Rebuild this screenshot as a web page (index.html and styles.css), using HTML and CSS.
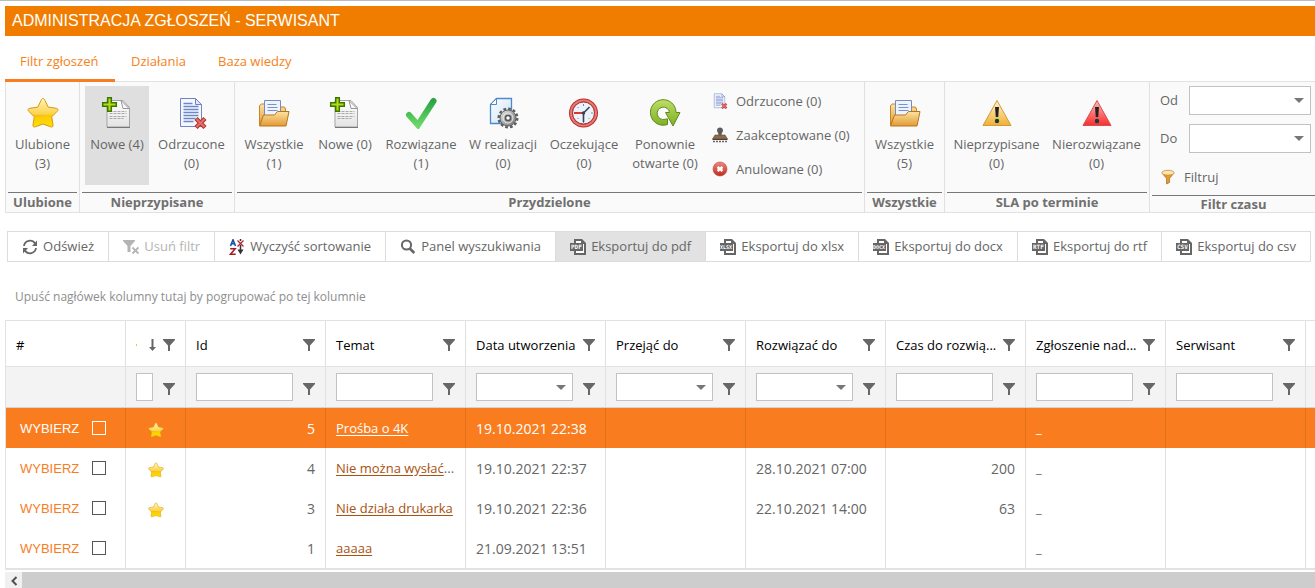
FILE: index.html
```html
<!DOCTYPE html>
<html lang="pl">
<head>
<meta charset="utf-8">
<title>Administracja zgłoszeń - Serwisant</title>
<link rel="stylesheet" href="styles.css">
</head>
<body>
<svg class="sprite" aria-hidden="true">
  <defs>
    <linearGradient id="gold" x1="0" y1="0" x2="0" y2="1"><stop offset="0" stop-color="#fff6b8"/><stop offset=".55" stop-color="#fbd34e"/><stop offset=".6" stop-color="#f6bd12"/><stop offset="1" stop-color="#ffe600"/></linearGradient>
    <linearGradient id="paper" x1="0" y1="0" x2="0" y2="1"><stop offset="0" stop-color="#ffffff"/><stop offset="1" stop-color="#e4e2e2"/></linearGradient>
    <linearGradient id="bluepaper" x1="0" y1="0" x2="1" y2="1"><stop offset="0" stop-color="#ffffff"/><stop offset="1" stop-color="#c8e0f5"/></linearGradient>
    <linearGradient id="folder" x1="0" y1="0" x2="0" y2="1"><stop offset="0" stop-color="#fde3a2"/><stop offset="1" stop-color="#e29a34"/></linearGradient>
    <linearGradient id="tick" x1="0" y1="0" x2="0" y2="1"><stop offset="0" stop-color="#2ba444"/><stop offset="1" stop-color="#6ad866"/></linearGradient>
    <linearGradient id="steel" x1="0" y1="0" x2="1" y2="1"><stop offset="0" stop-color="#e6e6e6"/><stop offset="1" stop-color="#707070"/></linearGradient>
    <linearGradient id="lime" x1="0" y1="0" x2="0" y2="1"><stop offset="0" stop-color="#c0dd66"/><stop offset="1" stop-color="#7bb024"/></linearGradient>
    <linearGradient id="amber" x1="0" y1="0" x2="0" y2="1"><stop offset="0" stop-color="#fff6cf"/><stop offset="1" stop-color="#efb032"/></linearGradient>
    <linearGradient id="alarm" x1="0" y1="0" x2="0" y2="1"><stop offset="0" stop-color="#ffb8b8"/><stop offset="1" stop-color="#f92d2d"/></linearGradient>
    <linearGradient id="red" x1="0" y1="0" x2="0" y2="1"><stop offset="0" stop-color="#ec8a80"/><stop offset="1" stop-color="#c02a1c"/></linearGradient>
  </defs>
  <symbol id="star" viewBox="0 0 32 32"><path d="M16 1.500c1 0 1.500.8 2 2l3.200 6.600 8 1.200c2 .4 2.300 1.600 1 3l-5.500 5.500 1.300 8c.2 2-.9 2.700-2.600 1.900L16 27l-7.400 2.700c-1.700.8-2.800.1-2.600-1.900l1.300-8L1.800 14.300c-1.300-1.400-1-2.600 1-3l8-1.200L14 3.500c.5-1.200 1-2 2-2z" fill="url(#gold)" stroke="#d9960c" stroke-width="1"/><path d="M7 20c7 0 13-2 19-6l-2 7 1 7-9-3-8 3z" fill="#ffd900" opacity=".4"/></symbol>
  <symbol id="doc-plus" viewBox="0 0 32 32"><path d="M6 3.500h16l6.500 7V30H6z" fill="url(#paper)" stroke="#a3a3a3"/><path d="M6 30.500h23" stroke="#777"/><path d="M20 3.500l8 8h-6z" fill="#f8f8f8" stroke="#999"/><path d="M8.500 14.500h17M8.500 16.500h17M8.500 19.500h17M8.500 21.500h14" stroke="#aaa" stroke-dasharray="3 1"/><path d="M6.700.7h3.600v5h5v3.600h-5v5H6.700v-5h-5V5.700h5z" fill="#b6da19" stroke="#397700" stroke-width="1.500"/></symbol>
  <symbol id="doc-x" viewBox="0 0 32 32"><path d="M4.500 1.500h15l6 6v22h-21z" fill="#f4f7fe" stroke="#6f86c0"/><path d="M19.500 1.500v6h6z" fill="#dfe7fb" stroke="#6f86c0"/><path d="M7.500 6.500h9M7.500 9.500h15M7.500 12.500h15M7.500 15.500h15M7.500 18.500h15M7.500 21.500h12M7.500 24.500h10" stroke="#6c86c6" stroke-width="1.300"/><path d="M20 21.500l9 9M29 21.500l-9 9" stroke="#b4302d" stroke-width="4.400"/><path d="M20.500 22l8 8M28.500 22l-8 8" stroke="#e27167" stroke-width="2.200"/></symbol>
  <symbol id="folder-open" viewBox="0 0 32 32"><path d="M1.500 28V8.500l2-1.500h4l1 3h18l1 2v6" fill="url(#folder)" stroke="#c48627"/><path d="M6.500 3.500h16v19h-16z" fill="#eef4ff" stroke="#748bc3"/><path d="M9.500 7.500h9M9.500 10.500h10M9.500 13.500h10" stroke="#7890cc"/><path d="M1.500 29l4-11h11l3-3.500h11.500L28 29z" fill="url(#folder)" stroke="#b8741c"/></symbol>
  <symbol id="check" viewBox="0 0 32 32"><path d="M4 18l9 10L28.500 4" fill="none" stroke="url(#tick)" stroke-width="6" stroke-linecap="round"/></symbol>
  <symbol id="doc-gear" viewBox="0 0 32 32"><path d="M9.500 1.500h15v25h-21v-19z" fill="url(#bluepaper)" stroke="#4f89c6" stroke-width="1.300"/><path d="M9.500 1.500v6h-6z" fill="#fff" stroke="#4f89c6"/><circle cx="21" cy="21" r="9" fill="none" stroke="#5e5e5e" stroke-width="3" stroke-dasharray="2.700 2"/><circle cx="21" cy="21" r="8" fill="url(#steel)" stroke="#666"/><circle cx="21" cy="21" r="5" fill="none" stroke="#eee" stroke-width="1"/><circle cx="21" cy="21" r="2.500" fill="#fff" stroke="#555" stroke-width="1.500"/></symbol>
  <symbol id="clock" viewBox="0 0 32 32"><circle cx="15.500" cy="16" r="14.500" fill="#bd2b2d"/><circle cx="15.500" cy="16" r="12.500" fill="none" stroke="#e67b76" stroke-width="2"/><circle cx="15.500" cy="16" r="11" fill="#edf3fa" stroke="#a33"/><path d="M15.500 7v2M15.500 23v3M7 16h2M23 16h2M9.500 10l1 1M9.500 22l1-1M21.500 22l-1-1" stroke="#7a869a"/><path d="M15.500 16H6" stroke="#d22" stroke-width="1.800"/><path d="M15.500 25v-9l6-6" fill="none" stroke="#354358" stroke-width="1.600"/><circle cx="15.500" cy="16" r="1.700" fill="#354358"/></symbol>
  <symbol id="reopen" viewBox="0 0 32 32"><path d="M18.500 27.500A12.800 12.800 0 1 1 27 15.500h4L24 29l-7.500-13.500h4a6.200 6.200 0 1 0-4.500 6.800l2.500-.5z" fill="url(#lime)" stroke="#5f8b1c"/></symbol>
  <symbol id="warn" viewBox="0 0 32 32"><path d="M16 3.500l14 25H2z" fill="url(#amber)" stroke="#d29a38" stroke-linejoin="round"/><path d="M14 10h4l-.8 10h-2.400z" fill="#222"/><circle cx="16" cy="24" r="2.200" fill="#123b44"/></symbol>
  <symbol id="alert" viewBox="0 0 32 32"><path d="M16 3.500l14 25H2z" fill="url(#alarm)" stroke="#d65050" stroke-linejoin="round"/><path d="M14 10h4l-.8 10h-2.400z" fill="#222"/><circle cx="16" cy="24" r="2.200" fill="#123b44"/></symbol>
  <symbol id="stamp" viewBox="0 0 16 16"><path d="M5 3.500C5 1.500 6.300.5 8 .5s3 1 3 3c0 1.500-1.500 2-1.500 4.500h-3C6.500 5.500 5 5 5 3.500z" fill="#5c5c5c"/><path d="M3 8h10l2.500 4H.5z" fill="#8e6a46" stroke="#5f4a38" stroke-width=".6"/><path d="M.5 12.500h15" stroke="#444"/><path d="M1 14.500h14" stroke="#666" stroke-width="1.600" stroke-dasharray="2 1"/></symbol>
  <symbol id="cancel" viewBox="0 0 16 16"><circle cx="8" cy="8" r="7" fill="url(#red)" stroke="#b4473c" stroke-width=".6"/><path d="M5.500 6l5 4M10.500 6l-5 4" stroke="#fff" stroke-width="2.400"/></symbol>
  <symbol id="funnel-gold" viewBox="0 0 16 16"><path d="M2 4l4.500 5.500V15l3-1.500v-4L14 4z" fill="#e49b2d" stroke="#a86a1f" stroke-width=".7"/><ellipse cx="8" cy="3.700" rx="6.200" ry="2.400" fill="#fde6b1" stroke="#c68a35" stroke-width=".8"/></symbol>
  <symbol id="filter" viewBox="0 0 12 12"><path d="M0 0h12v1L7 6.500V12H5V6.500L0 1z" fill="currentColor"/></symbol>
  <symbol id="filter-off" viewBox="0 0 16 16"><path d="M0 1h12v1L7.500 7v6h-3V7L0 2z" fill="currentColor"/><path d="M9.500 8.500l6 6M15.500 8.500l-6 6" stroke="currentColor" stroke-width="1.800"/></symbol>
  <symbol id="refresh" viewBox="0 0 16 16"><path d="M2 7a6 6 0 0 1 11-2.500M14 9a6 6 0 0 1-11 2.500" fill="none" stroke="currentColor" stroke-width="1.800"/><path d="M15 1.500V7h-5zM1 14.500V9h5z" fill="currentColor"/></symbol>
  <symbol id="sort-clear" viewBox="0 0 16 16"><path d="M1.500 7L4 .8 6.500 7M2.300 4.800h3.400" fill="none" stroke="#164f9c" stroke-width="1.600"/><path d="M1.200 9.700h5L1.500 15.200h5.200" fill="none" stroke="#a51c24" stroke-width="1.500"/><path d="M11.500 0v2M11.500 6v5" stroke="#333" stroke-width="1.500"/><path d="M8.500 10.500h6l-3 5z" fill="#333"/><path d="M8.500 1.500l6 6M14.500 1.500l-6 6" stroke="#b3262d" stroke-width="1.300"/></symbol>
  <symbol id="search" viewBox="0 0 16 16"><circle cx="6.500" cy="6" r="4.600" fill="none" stroke="currentColor" stroke-width="2"/><path d="M9.800 9.500l4.500 4.500" stroke="currentColor" stroke-width="2.600"/></symbol>
  <symbol id="file" viewBox="0 0 16 16"><path d="M4 0h8l4 4v12H4z" fill="currentColor"/><path d="M6 2h5v3h3v9H6z" fill="#fff"/><path d="M0 4h13v8H0z" fill="currentColor"/></symbol>
  <symbol id="arrow-down" viewBox="0 0 7 12"><path d="M2.500 0h2v8H7l-3.500 4L0 8h2.500z" fill="currentColor"/></symbol>
  <symbol id="caret" viewBox="0 0 10 5"><path d="M0 0h10L5 5z" fill="currentColor"/></symbol>
</svg>

<div class="page">
  <h1 class="title">ADMINISTRACJA ZGŁOSZEŃ - SERWISANT</h1>

  <nav class="tabs">
    <a class="tab tab-active" href="#filtr">Filtr zgłoszeń</a>
    <a class="tab" href="#dzialania">Działania</a>
    <a class="tab" href="#baza">Baza wiedzy</a>
  </nav>

  <div class="ribbon">
    <section class="group">
      <div class="items items-single">
        <button class="item"><svg class="big"><use href="#star"/></svg><span>Ulubione<br>(3)</span></button>
      </div>
      <h2 class="caption">Ulubione</h2>
    </section>
    <section class="group">
      <div class="items items-unassigned">
        <button class="item item-on"><svg class="big"><use href="#doc-plus"/></svg><span>Nowe (4)</span></button>
        <button class="item"><svg class="big"><use href="#doc-x"/></svg><span>Odrzucone<br>(0)</span></button>
      </div>
      <h2 class="caption">Nieprzypisane</h2>
    </section>
    <section class="group">
      <div class="items items-assigned">
        <button class="item"><svg class="big"><use href="#folder-open"/></svg><span>Wszystkie<br>(1)</span></button>
        <button class="item"><svg class="big"><use href="#doc-plus"/></svg><span>Nowe (0)</span></button>
        <button class="item"><svg class="big"><use href="#check"/></svg><span>Rozwiązane<br>(1)</span></button>
        <button class="item"><svg class="big"><use href="#doc-gear"/></svg><span>W realizacji<br>(0)</span></button>
        <button class="item"><svg class="big"><use href="#clock"/></svg><span>Oczekujące<br>(0)</span></button>
        <button class="item"><svg class="big"><use href="#reopen"/></svg><span>Ponownie<br>otwarte (0)</span></button>
        <div class="stack">
          <button class="line"><svg class="small"><use href="#doc-x"/></svg>Odrzucone (0)</button>
          <button class="line"><svg class="small"><use href="#stamp"/></svg>Zaakceptowane (0)</button>
          <button class="line"><svg class="small"><use href="#cancel"/></svg>Anulowane (0)</button>
        </div>
      </div>
      <h2 class="caption">Przydzielone</h2>
    </section>
    <section class="group">
      <div class="items items-single">
        <button class="item"><svg class="big"><use href="#folder-open"/></svg><span>Wszystkie<br>(5)</span></button>
      </div>
      <h2 class="caption">Wszystkie</h2>
    </section>
    <section class="group">
      <div class="items items-sla">
        <button class="item"><svg class="big"><use href="#warn"/></svg><span>Nieprzypisane<br>(0)</span></button>
        <button class="item"><svg class="big"><use href="#alert"/></svg><span>Nierozwiązane<br>(0)</span></button>
      </div>
      <h2 class="caption">SLA po terminie</h2>
    </section>
    <section class="group">
      <div class="period">
        <div class="field"><label for="od">Od</label><span class="combo"><input id="od" type="text"><button class="drop" aria-label="Wybierz datę od"><svg><use href="#caret"/></svg></button></span></div>
        <div class="field"><label for="do">Do</label><span class="combo"><input id="do" type="text"><button class="drop" aria-label="Wybierz datę do"><svg><use href="#caret"/></svg></button></span></div>
        <button class="line"><svg class="small"><use href="#funnel-gold"/></svg>Filtruj</button>
      </div>
      <h2 class="caption">Filtr czasu</h2>
    </section>
  </div>

  <div class="toolbar">
    <button class="tool"><svg><use href="#refresh"/></svg>Odśwież</button>
    <button class="tool" disabled><svg><use href="#filter-off"/></svg>Usuń filtr</button>
    <button class="tool"><svg><use href="#sort-clear"/></svg>Wyczyść sortowanie</button>
    <button class="tool"><svg><use href="#search"/></svg>Panel wyszukiwania</button>
    <button class="tool tool-on"><svg><use href="#file"/><text x="1" y="10">PDF</text></svg>Eksportuj do pdf</button>
    <button class="tool"><svg><use href="#file"/><text class="long" x="0" y="10">XLSX</text></svg>Eksportuj do xlsx</button>
    <button class="tool"><svg><use href="#file"/><text class="long" x="0" y="10">DOCX</text></svg>Eksportuj do docx</button>
    <button class="tool"><svg><use href="#file"/><text x="1" y="10">RTF</text></svg>Eksportuj do rtf</button>
    <button class="tool"><svg><use href="#file"/><text x="1" y="10">CSV</text></svg>Eksportuj do csv</button>
  </div>

  <p class="hint">Upuść nagłówek kolumny tutaj by pogrupować po tej kolumnie</p>

  <div class="grid">
    <table>
      <colgroup><col class="c-pick"><col class="c-fav"><col><col><col><col><col><col><col><col><col></colgroup>
      <thead>
        <tr class="head">
          <th>#</th>
          <th><div class="cell"><i class="speck"></i><svg class="sort"><use href="#arrow-down"/></svg><svg class="flt"><use href="#filter"/></svg></div></th>
          <th><div class="cell">Id<svg class="flt"><use href="#filter"/></svg></div></th>
          <th><div class="cell">Temat<svg class="flt"><use href="#filter"/></svg></div></th>
          <th><div class="cell">Data utworzenia<svg class="flt"><use href="#filter"/></svg></div></th>
          <th><div class="cell">Przejąć do<svg class="flt"><use href="#filter"/></svg></div></th>
          <th><div class="cell">Rozwiązać do<svg class="flt"><use href="#filter"/></svg></div></th>
          <th><div class="cell">Czas do rozwią...<svg class="flt"><use href="#filter"/></svg></div></th>
          <th><div class="cell">Zgłoszenie nad...<svg class="flt"><use href="#filter"/></svg></div></th>
          <th><div class="cell">Serwisant<svg class="flt"><use href="#filter"/></svg></div></th>
          <th></th>
        </tr>
        <tr class="filters">
          <td></td>
          <td><div class="cell"><span class="combo"><input type="text" aria-label="Filtr ulubionych"></span><svg class="flt"><use href="#filter"/></svg></div></td>
          <td><div class="cell"><span class="combo"><input type="text" aria-label="Filtr Id"></span><svg class="flt"><use href="#filter"/></svg></div></td>
          <td><div class="cell"><span class="combo"><input type="text" aria-label="Filtr Temat"></span><svg class="flt"><use href="#filter"/></svg></div></td>
          <td><div class="cell"><span class="combo"><input type="text" aria-label="Filtr Data utworzenia"><button class="drop" aria-label="Kalendarz"><svg><use href="#caret"/></svg></button></span><svg class="flt"><use href="#filter"/></svg></div></td>
          <td><div class="cell"><span class="combo"><input type="text" aria-label="Filtr Przejąć do"><button class="drop" aria-label="Kalendarz"><svg><use href="#caret"/></svg></button></span><svg class="flt"><use href="#filter"/></svg></div></td>
          <td><div class="cell"><span class="combo"><input type="text" aria-label="Filtr Rozwiązać do"><button class="drop" aria-label="Kalendarz"><svg><use href="#caret"/></svg></button></span><svg class="flt"><use href="#filter"/></svg></div></td>
          <td><div class="cell"><span class="combo"><input type="text" aria-label="Filtr Czas do rozwiązania"></span><svg class="flt"><use href="#filter"/></svg></div></td>
          <td><div class="cell"><span class="combo"><input type="text" aria-label="Filtr Zgłoszenie nadrzędne"></span><svg class="flt"><use href="#filter"/></svg></div></td>
          <td><div class="cell"><span class="combo"><input type="text" aria-label="Filtr Serwisant"></span><svg class="flt"><use href="#filter"/></svg></div></td>
          <td></td>
        </tr>
      </thead>
      <tbody>
        <tr class="selected">
          <td><div class="pick"><button>WYBIERZ</button><input type="checkbox" aria-label="Zaznacz 5"></div></td>
          <td class="fav"><svg><use href="#star"/></svg></td><td class="num">5</td><td><a href="#z5">Prośba o 4K</a></td><td class="date">19.10.2021 22:38</td><td class="date"></td><td class="date"></td><td class="num"></td><td>_</td><td></td><td></td>
        </tr>
        <tr>
          <td><div class="pick"><button>WYBIERZ</button><input type="checkbox" aria-label="Zaznacz 4"></div></td>
          <td class="fav"><svg><use href="#star"/></svg></td><td class="num">4</td><td><a href="#z4">Nie można wysłać</a>...</td><td class="date">19.10.2021 22:37</td><td class="date"></td><td class="date">28.10.2021 07:00</td><td class="num">200</td><td>_</td><td></td><td></td>
        </tr>
        <tr>
          <td><div class="pick"><button>WYBIERZ</button><input type="checkbox" aria-label="Zaznacz 3"></div></td>
          <td class="fav"><svg><use href="#star"/></svg></td><td class="num">3</td><td><a href="#z3">Nie działa drukarka</a></td><td class="date">19.10.2021 22:36</td><td class="date"></td><td class="date">22.10.2021 14:00</td><td class="num">63</td><td>_</td><td></td><td></td>
        </tr>
        <tr>
          <td><div class="pick"><button>WYBIERZ</button><input type="checkbox" aria-label="Zaznacz 1"></div></td>
          <td class="fav"></td><td class="num">1</td><td><a href="#z1">aaaaa</a></td><td class="date">21.09.2021 13:51</td><td class="date"></td><td class="date"></td><td class="num"></td><td>_</td><td></td><td></td>
        </tr>
      </tbody>
    </table>
  </div>
  <div class="scrollbar"><button aria-label="Przewiń w lewo"><svg viewBox="0 0 8 10"><path d="M6.500 1L2.500 5l4 4" fill="none" stroke="#505050" stroke-width="2"/></svg></button><div class="thumb"></div></div>
</div>
</body>
</html>
```
FILE: styles.css
```css
* { box-sizing: border-box; }
body { margin: 0; background: #fff; color: #666; font: 14px/19px "Open Sans", "Noto Sans", sans-serif; overflow: hidden; }
button, input { font: inherit; color: inherit; margin: 0; padding: 0; border: 0; background: none; }
a { color: inherit; }
svg { display: block; flex: none; }
.sprite { position: absolute; width: 0; height: 0; }
.page { border-top: 1px solid #bbb; padding: 5px 0 0 5px; }

.title { margin: 0; padding: 0 7px; background: #f07d00; color: #fff; font: 16px/30px "Liberation Sans", Arial, sans-serif; }

.tabs { display: flex; height: 46px; font-size: 13px; color: #f78119; position: relative; z-index: 1; }
.tab { padding: 16px 16px 0; border-bottom: 3px solid transparent; text-decoration: none; }
.tab-active { min-width: 110px; padding: 16px 15px 0; border-color: #f97d1f; }

.ribbon { display: grid; grid-template-columns: 74px 155px 630px 80px 205px 1fr; margin-top: -1px; border: 1px solid #e2e2e2; border-right: 0; background: #fafafa; font-size: 13px; }
.group { display: flex; flex-direction: column; padding: 4px 2px 0; border-right: 1px solid #e0e0e0; }
.group:last-child { border-right: 0; padding-right: 0; }
.items { display: grid; height: 106px; padding: 0 2px; gap: 4px; }
.items-single { grid-template-columns: 1fr; padding: 0; }
.items-unassigned { grid-template-columns: 64px 77px; padding: 0 3px; }
.items-assigned { grid-template-columns: 70px 64px 80px 76px 78px 76px 1fr; }
.items-sla { grid-template-columns: 95px 97px; }
.item { display: flex; flex-direction: column; align-items: center; justify-content: flex-start; gap: 6px; height: 99px; padding-top: 11px; white-space: nowrap; text-align: center; }
.item-on { background: #dfdfdf; }
.big { width: 32px; height: 32px; }
.stack { display: flex; flex-direction: column; gap: 10px; padding: 3px 0 0 5px; }
.line { display: flex; align-items: center; gap: 8px; height: 24px; white-space: nowrap; }
.small { width: 16px; height: 16px; }
.caption { margin: 0; border-top: 1px solid #777; font-size: 13px; line-height: 19px; text-align: center; color: #707070; }
.period { height: 109px; padding: 0 4px 0 8px; }
.period + .caption { line-height: 16px; }
.period .line { height: 30px; }
.field { display: flex; align-items: center; height: 29px; margin-bottom: 9px; }
.field label { flex: none; width: 29px; }
.field .combo { height: 29px; }
.combo { display: flex; flex: 1; min-width: 0; height: 28px; border: 1px solid #c2c2c2; background: #fff; }
.combo input { flex: 1; min-width: 0; width: 0; }
.drop { width: 22px; display: flex; align-items: center; justify-content: center; color: #777; }
.drop svg { width: 10px; height: 5px; }

.toolbar { display: flex; margin: 18px 4px 0 2px; border: 1px solid #dcdcdc; font-size: 13px; }
.tool { display: flex; flex: 1 1 auto; align-items: center; justify-content: center; gap: 5px; height: 29px; padding: 0; white-space: nowrap; border-right: 1px solid #dcdcdc; }
.tool:last-child { border-right: 0; }
.tool svg { width: 16px; height: 16px; }
.tool text { font: bold 6px "DejaVu Sans Mono", monospace; fill: #fff; }
.tool .long { font-size: 5px; }
.tool:disabled { color: #b4b4b4; }
.tool-on { background: #e2e2e2; }

.hint { margin: 0; padding: 26px 10px 14px; font-size: 12px; line-height: 18px; color: #8e8e8e; }

.grid { overflow: hidden; border: 1px solid #e2e2e2; border-right: 0; border-bottom-width: 2px; }
table { table-layout: fixed; width: 1440px; border-collapse: separate; border-spacing: 0; font-size: 13px; }
col { width: 140px; }
.c-pick { width: 120px; }
.c-fav { width: 60px; }
th, td { height: 40px; padding: 0 10px; border-right: 1px solid #e0e0e0; text-align: left; white-space: nowrap; overflow: hidden; }
.head th { height: 46px; color: #000; font-weight: 400; border-bottom: 1px solid #e2e2e2; padding-top: 3px; }
.filters td { height: 41px; background: #f3f3f3; border-bottom: 1px solid #d4d4d4; }
.cell { display: flex; align-items: center; justify-content: space-between; }
.filters .cell { gap: 10px; }
.flt { width: 12px; height: 12px; color: #666; }
.filters .flt { margin-top: 4px; }
.sort { width: 7px; height: 12px; margin-left: 4px; color: #666; }
.speck { width: 1px; height: 2px; background: #e8c060; }
.num, .date { font-size: 14px; }
td.num { text-align: right; }
.pick { display: flex; align-items: center; gap: 13px; padding-left: 4px; }
.pick button { color: #f97d1f; font: 13px/19px "Liberation Sans", Arial, sans-serif; }
.pick input { appearance: none; width: 14px; height: 14px; border: 1px solid #555; }
.fav svg { width: 16px; height: 16px; margin: 4px auto 0; }
tbody a { color: #a9510f; text-underline-offset: 2px; }
.selected td { background: #f97d1f; border-color: #e27019; color: #fff; }
.selected a, .selected button { color: #fff; }
.selected .pick input { border-color: #fff; }

.scrollbar { display: flex; height: 17px; margin-top: 2px; background: #f0f0f0; }
.scrollbar button { display: flex; align-items: center; justify-content: center; width: 17px; }
.scrollbar svg { width: 8px; height: 10px; }
.thumb { flex: 1; background: #cdcdcd; }
```
